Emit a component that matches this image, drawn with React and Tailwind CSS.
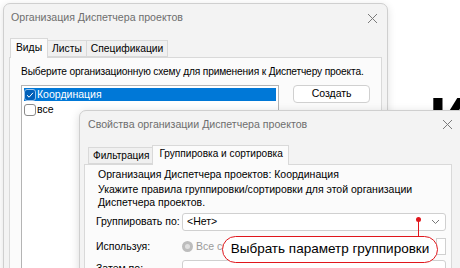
import React from 'react'

const font = { fontFamily: '"Liberation Sans", Arial, sans-serif' }

function CloseX() {
    return (
        <svg width="11" height="11" viewBox="0 0 11 11" className="text-[#7a7a7a]">
            <path d="M1 1 L10 10 M10 1 L1 10" stroke="currentColor" strokeWidth="1" />
        </svg>
    )
}

function Check({ checked }) {
    return checked ? (
        <span className="flex h-[12px] w-[12px] shrink-0 items-center justify-center rounded-[3px] border border-[#9cc3ea] bg-[#005fb8]">
            <svg width="8" height="8" viewBox="0 0 8 8">
                <path d="M1 4.2 L3.1 6.2 L7 1.8" stroke="white" strokeWidth="1" fill="none" />
            </svg>
        </span>
    ) : (
        <span className="h-[12px] w-[12px] shrink-0 rounded-[3px] border border-[#8a8a8a] bg-white" />
    )
}

function BackDialog() {
    return (
        <div className="absolute left-[3px] top-[3px] flex h-[320px] w-[385px] flex-col rounded-[7px] border border-[#cfcfcf] bg-[#f3f3f3] shadow-[0_2px_8px_rgba(0,0,0,0.12)]">
            <div className="flex h-[28px] items-center justify-between pl-[7px] pr-[9px] text-[10.6px] text-[#6e6e6e]">
                <span className="whitespace-nowrap">Организация Диспетчера проектов</span>
                <CloseX />
            </div>
            <div className="flex whitespace-nowrap px-[6px] pt-[6px] text-[10.3px] leading-[14px] text-black">
                <div className="z-10 -mb-px border border-b-0 border-[#d9d9d9] bg-[#fbfbfb] pb-[3px] pl-[5px] pr-[5px] pt-[2px]">
                    Виды
                </div>
                <div className="mt-[2px] border border-l-0 border-[#d9d9d9] bg-[#f0f0f0] px-[4px] pt-[1px]">
                    Листы
                </div>
                <div className="mt-[2px] border border-l-0 border-[#d9d9d9] bg-[#f0f0f0] px-[4px] pt-[1px]">
                    Спецификации
                </div>
            </div>
            <div className="mx-[5px] flex-1 border border-[#d9d9d9] bg-[#fbfbfb] px-[11px] pt-[7px] text-[10.5px]">
                <div className="whitespace-nowrap text-[10.2px] leading-[14px] tracking-[-0.15px]">
                    Выберите организационную схему для применения к Диспетчеру проекта.
                </div>
                <div className="mt-[6px] flex gap-[14px]">
                    <div className="h-[200px] w-[259px] border border-[#b4b4b4] bg-white p-[2px]">
                        <div className="flex h-[13px] items-center gap-[1px] bg-[#0078d7] text-white">
                            <Check checked />
                            <span className="leading-[13px]">Координация</span>
                        </div>
                        <div className="mt-[2px] flex h-[13px] items-center gap-[1px]">
                            <Check />
                            <span className="leading-[13px]">все</span>
                        </div>
                    </div>
                    <div className="flex h-[18px] w-[77px] items-center justify-center rounded-[4px] border border-[#d0d0d0] bg-white">
                        Создать
                    </div>
                </div>
            </div>
        </div>
    )
}

function FrontDialog() {
    return (
        <div className="absolute left-[79px] top-[110px] flex h-[200px] w-[400px] flex-col rounded-tl-[7px] border border-[#cfcfcf] bg-[#f3f3f3] shadow-[0_2px_10px_rgba(0,0,0,0.15)]">
            <div className="flex h-[27px] items-center justify-between pl-[8px] text-[10.6px] text-[#6e6e6e]">
                <span className="whitespace-nowrap">Свойства организации Диспетчера проектов</span>
                <span className="mr-[25px]">
                    <CloseX />
                </span>
            </div>
            <div className="flex whitespace-nowrap px-[8px] pt-[7px] text-[10.1px] leading-[14px] text-black">
                <div className="mt-[2px] border border-r-0 border-[#d9d9d9] bg-[#f0f0f0] pl-[4px] pr-[3px] pt-[1px]">
                    Фильтрация
                </div>
                <div className="z-10 -mb-px border border-b-0 border-[#d9d9d9] bg-[#fbfbfb] pb-[3px] pl-[6px] pr-[5px] pt-[1px]">
                    Группировка и сортировка
                </div>
            </div>
            <div className="mx-[4px] w-[368px] flex-1 whitespace-nowrap border border-[#d9d9d9] bg-[#fbfbfb] pl-[13px] pt-[2px] text-[10.5px]">
                <div className="leading-[14px]">Организация Диспетчера проектов: Координация</div>
                <div className="mt-[2px] leading-[13px]">
                    Укажите правила группировки/сортировки для этой организации
                    <br />
                    Диспетчера проектов.
                </div>
                <div className="mt-[4px] flex items-center">
                    <span className="-ml-[2px] w-[86px]">Группировать по:</span>
                    <div className="flex h-[18px] w-[264px] items-center justify-between rounded-[3px] border border-[#d0d0d0] bg-white pl-[4px] pr-[5px]">
                        <span>&lt;Нет&gt;</span>
                        <svg width="9" height="6" viewBox="0 0 9 6">
                            <path d="M1 1 L4.5 4.5 L8 1" stroke="#777" strokeWidth="1" fill="none" />
                        </svg>
                    </div>
                </div>
                <div className="mt-[7px] flex h-[17px] items-center">
                    <span className="-ml-[2px] w-[86px]">Используя:</span>
                    <div className="flex items-center gap-[3px] text-[#9a9a9a]">
                        <span className="h-[11px] w-[11px] rounded-full border-[3px] border-[#bdbdbd] bg-[#e0e0e0]" />
                        <span>Все символы</span>
                    </div>
                    <div className="ml-auto mr-[5px] h-[17px] w-[10px] border border-[#d0d0d0] bg-white" />
                </div>
                <div className="mt-[5px] flex items-center">
                    <span className="-ml-[2px] w-[86px]">Затем по:</span>
                    <div className="h-[18px] w-[264px] rounded-[3px] border border-[#d0d0d0] bg-white" />
                </div>
            </div>
        </div>
    )
}

export default function App() {
    return (
        <div className="relative h-[268px] w-[460px] overflow-hidden bg-white" style={font}>
            <div className="absolute left-[429px] top-[89px] text-[64px] font-bold leading-none text-black">
                Ка
            </div>
            <BackDialog />
            <FrontDialog />
            {/* callout */}
            <div className="absolute left-[416px] top-[217px] h-[5px] w-[5px] rounded-full bg-[#e0161c]" />
            <div className="absolute left-[418px] top-[220px] h-[17px] w-[1px] bg-[#e0161c]" />
            <div className="absolute left-[222px] top-[236px] flex h-[27px] w-[216px] items-center justify-center whitespace-nowrap rounded-full border-[1.5px] border-[#e0161c] bg-white text-[13.5px] text-black">
                Выбрать параметр группировки
            </div>
        </div>
    )
}
